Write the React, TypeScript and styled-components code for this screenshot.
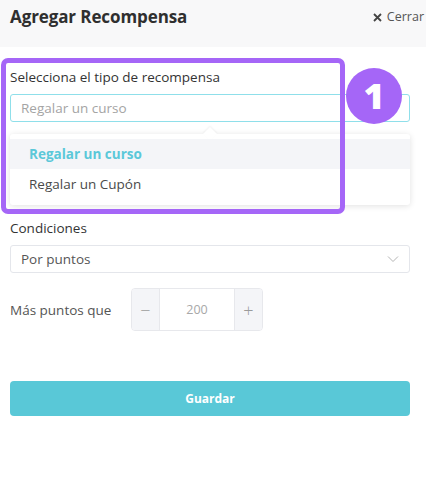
import React from "react";
import styled, { createGlobalStyle } from "styled-components";

const Global = createGlobalStyle`
  html, body { margin: 0; padding: 0; background: #ffffff; }
  body { font-family: "Open Sans", "Liberation Sans", sans-serif; }
  * { box-sizing: border-box; }
`;

const Page = styled.div`
  position: relative;
  width: 426px;
  height: 480px;
  background: #ffffff;
  overflow: hidden;
`;

const Header = styled.div`
  display: flex;
  align-items: flex-start;
  justify-content: space-between;
  height: 47px;
  padding: 5px 2px 0 10px;
  background: #f8f8f9;
`;

const Title = styled.h1`
  margin: 0;
  font-size: 17px;
  font-weight: 700;
  color: #2f2f2f;
  line-height: 24px;
  letter-spacing: -0.1px;
`;

const Close = styled.button`
  display: flex;
  align-items: center;
  gap: 5px;
  margin-top: 4px;
  border: 0;
  background: none;
  padding: 0;
  font-family: inherit;
  font-size: 12.5px;
  color: #555;
  line-height: 16px;
`;

const Body = styled.div`
  display: flex;
  flex-direction: column;
  padding: 21px 16px 0 10px;
`;

const Label = styled.div`
  font-size: 13.5px;
  font-weight: 500;
  color: #333;
  line-height: 18px;
`;

const Field = styled.div<{ $mt?: number }>`
  position: relative;
  margin-top: ${(p) => p.$mt ?? 0}px;
`;

const Input = styled.div<{ $active?: boolean; $muted?: boolean }>`
  display: flex;
  align-items: center;
  justify-content: space-between;
  height: 28px;
  padding: 0 10px;
  border: 1px solid ${(p) => (p.$active ? "#8fdfea" : "#e4e6eb")};
  border-radius: 3px;
  font-size: 13.5px;
  color: ${(p) => (p.$muted ? "#a4a4a4" : "#555")};
`;

const Menu = styled.div`
  position: absolute;
  left: 0;
  right: 0;
  top: 40px;
  padding: 5px 0 6px;
  background: #fff;
  border-radius: 3px;
  box-shadow: 0 1px 6px rgba(0, 0, 0, 0.12);
  &::before {
    content: "";
    position: absolute;
    top: -5px;
    left: 195px;
    width: 10px;
    height: 10px;
    background: #fff;
    transform: rotate(45deg);
    box-shadow: -1px -1px 2px rgba(0, 0, 0, 0.05);
  }
`;

const Option = styled.div<{ $selected?: boolean }>`
  position: relative;
  display: flex;
  align-items: center;
  height: 30px;
  padding: 0 19px;
  font-size: 13.5px;
  font-weight: ${(p) => (p.$selected ? 700 : 500)};
  color: ${(p) => (p.$selected ? "#5bc8d9" : "#4a4a4a")};
  background: ${(p) => (p.$selected ? "#f4f5f8" : "#fff")};
`;

const Row = styled.div`
  display: flex;
  align-items: center;
  margin-top: 15px;
`;

const InlineLabel = styled.div`
  width: 121px;
  font-size: 13.5px;
  color: #555;
`;

const Stepper = styled.div`
  display: flex;
  height: 43px;
  border: 1px solid #e7e8ec;
  border-radius: 4px;
  overflow: hidden;
`;

const StepBtn = styled.div`
  display: flex;
  align-items: center;
  justify-content: center;
  width: 27px;
  background: #f4f5f8;
  color: #9a9a9a;
  font-size: 18px;
  font-weight: 300;
`;

const StepValue = styled.div`
  display: flex;
  align-items: center;
  justify-content: center;
  width: 76px;
  background: #fff;
  border-left: 1px solid #e7e8ec;
  border-right: 1px solid #e7e8ec;
  font-size: 12.5px;
  color: #a8a8a8;
`;

const Save = styled.button`
  margin-top: 50px;
  height: 35px;
  border: 0;
  border-radius: 4px;
  background: #59c8d7;
  color: #fff;
  font-family: inherit;
  font-size: 12px;
  font-weight: 700;
`;

const Highlight = styled.div`
  position: absolute;
  left: 1px;
  top: 58px;
  width: 344px;
  height: 156px;
  border: 5px solid #a566f7;
  border-radius: 7px;
  pointer-events: none;
`;

const Badge = styled.div`
  position: absolute;
  left: 346px;
  top: 68px;
  width: 56px;
  height: 56px;
  border-radius: 50%;
  background: #a566f7;
  color: #fff;
  display: flex;
  align-items: center;
  justify-content: center;
  font-size: 36px;
  font-weight: 800;
  line-height: 1;
`;

const Chevron = () => (
  <svg width="12" height="8" viewBox="0 0 12 8" fill="none">
    <path d="M1 1.5L6 6.5L11 1.5" stroke="#b5b5b5" strokeWidth="1" />
  </svg>
);

const XIcon = () => (
  <svg width="9" height="9" viewBox="0 0 9 9">
    <path d="M1 1L8 8M8 1L1 8" stroke="#444" strokeWidth="1.8" />
  </svg>
);

export default function App() {
  return (
    <Page>
      <Global />
      <Header>
        <Title>Agregar Recompensa</Title>
        <Close>
          <XIcon />
          Cerrar
        </Close>
      </Header>
      <Body>
        <Label>Selecciona el tipo de recompensa</Label>
        <Field $mt={8}>
          <Input $active $muted>Regalar un curso</Input>
          <Menu>
            <Option $selected>Regalar un curso</Option>
            <Option>Regalar un Cupón</Option>
          </Menu>
        </Field>
        <Field $mt={97}>
          <Label>Condiciones</Label>
        </Field>
        <Field $mt={8}>
          <Input>
            Por puntos
            <Chevron />
          </Input>
        </Field>
        <Row>
          <InlineLabel>Más puntos que</InlineLabel>
          <Stepper>
            <StepBtn>−</StepBtn>
            <StepValue>200</StepValue>
            <StepBtn>+</StepBtn>
          </Stepper>
        </Row>
        <Save>Guardar</Save>
      </Body>
      <Highlight />
      <Badge>1</Badge>
    </Page>
  );
}
